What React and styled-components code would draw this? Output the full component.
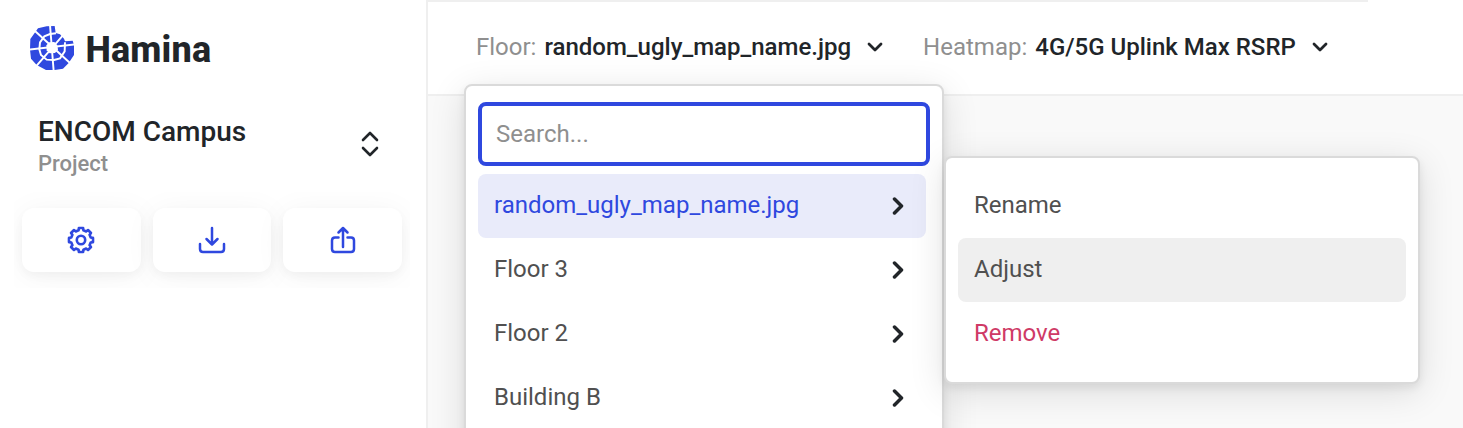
import React from "react";
import styled, { createGlobalStyle, css } from "styled-components";

const ink = "#212529";
const blue = "#2f48df";
const line = "#efefef";

const GlobalStyle = createGlobalStyle`
  *, *::before, *::after { box-sizing: border-box; }
  body { margin: 0; background: #fff; color: ${ink}; font-family: Roboto, "Liberation Sans", sans-serif; overflow: hidden; }
  button, input { font: inherit; color: inherit; }
`;

const Page = styled.div`
  display: flex;
  height: 428px;
  overflow: hidden;
`;

const Sidebar = styled.aside`
  width: 428px;
  flex: none;
  border-right: 2px solid ${line};
  display: flex;
  flex-direction: column;
`;

const Brand = styled.div`
  display: flex;
  align-items: center;
  height: 96px;
  padding-left: 30px;
  gap: 11.5px;
`;

const BrandName = styled.span`
  font-size: 36px;
  line-height: 44px;
  font-weight: 800;
  letter-spacing: 0.15px;
  margin-top: 3px;
`;

const ProjectSwitcher = styled.button`
  display: flex;
  align-items: center;
  justify-content: space-between;
  height: 96px;
  padding: 0 44px 0 38px;
  border: 0;
  background: none;
  text-align: left;
`;

const ProjectText = styled.span`
  display: flex;
  flex-direction: column;
  padding-top: 4px;
`;

const ProjectName = styled.span`
  font-size: 28px;
  line-height: 36px;
  font-weight: 500;
`;

const ProjectKind = styled.span`
  font-size: 22px;
  line-height: 28px;
  font-weight: 500;
  color: #8f8f8f;
`;

const Actions = styled.div`
  display: grid;
  grid-template-columns: repeat(3, 1fr);
  gap: 12px;
  width: 396px;
  margin-left: 14px;
  padding: 16px 8px;
  overflow: hidden;
`;

const ActionButton = styled.button`
  display: flex;
  align-items: center;
  justify-content: center;
  height: 64px;
  padding: 0;
  border: 0;
  border-radius: 12px;
  background: #fff;
  color: ${blue};
  box-shadow: 0 4px 32px rgba(0, 0, 0, 0.05), 0 4px 10px rgba(0, 0, 0, 0.035);
`;

const Main = styled.main`
  flex: 1;
  min-width: 0;
  background: #f9f9f9;
`;

const Toolbar = styled.header`
  display: flex;
  flex-direction: column;
  height: 96px;
  background: #fff;
  border-bottom: 2px solid ${line};
`;

const ToolbarEdge = styled.div`
  width: 940px;
  height: 2px;
  background: ${line};
`;

const Filters = styled.div`
  display: flex;
  align-items: center;
  height: 90px;
  padding-left: 48px;
  gap: 40px;
`;

const Picker = styled.div`
  position: relative;
  display: flex;
  align-items: center;
  font-size: 24px;
  line-height: 32px;
  white-space: nowrap;
`;

const PickerLabel = styled.span`
  color: #8f8f8f;
  margin-right: 8px;
`;

const PickerValue = styled.span`
  font-weight: 500;
  margin-right: 16px;
`;

const panel = css`
  position: absolute;
  background: #fff;
  border: 2px solid #dadada;
  border-radius: 8px;
  box-shadow: 0 4px 8px rgba(0, 0, 0, 0.07), 0 8px 36px rgba(0, 0, 0, 0.12);
`;

const FloorMenu = styled.div`
  ${panel}
  left: -12px;
  top: 53px;
  width: 480px;
  height: 420px;
  padding: 16px 12px;
`;

const FloorActions = styled.div`
  ${panel}
  left: 478px;
  top: 70px;
  width: 476px;
  height: 228px;
  padding: 16px 12px;
`;

const SearchField = styled.input`
  display: block;
  width: 452px;
  height: 64px;
  margin-bottom: 8px;
  padding: 0 14px;
  border: 4px solid ${blue};
  border-radius: 8px;
  background: #fff;
  outline: 0;
  &::placeholder { color: #8f8f8f; opacity: 1; }
`;

const rowLook = {
  plain: css`color: #505050;`,
  selected: css`color: ${blue}; background: #e9ebfa;`,
  hovered: css`color: #505050; background: #efefef;`,
  danger: css`color: #cf3a66;`,
};

const MenuRow = styled.div`
  display: flex;
  align-items: center;
  justify-content: space-between;
  width: 448px;
  height: 64px;
  padding: 0 22px 2px 16px;
  border-radius: 8px;
  ${(p) => rowLook[p.$look || "plain"]}
`;

const Stroke = styled.svg`
  display: block;
  flex: none;
  fill: none;
  stroke: currentColor;
  stroke-linecap: round;
  stroke-linejoin: round;
`;

const RowArrow = styled(Stroke)`
  color: ${ink};
  margin-top: 2px;
`;

const Logo = () => (
  <svg width="44" height="44" viewBox="30 33 132 132" aria-hidden="true">
    <path fill={blue} d="M31 72 54 40 80 34 104 33 107 54 120 58 132 71 135 79 158 77 162 90 162 120 146 144 129 161 104 165 78 165 50 150 33 131 30 104Z" />
    <g stroke="#fff" strokeWidth="5.8" fill="none">
      <path d="M90 30 101 168M27 104 165 88M45 48 150 144M128 62 48 154" />
      <path d="M135 82 134 109 120 130 102 135 80 134 63 120 58 103 60 82 73 64 90 57 108 55" />
    </g>
    <path fill="#fff" d="M88 82 103 81 112 91 114 104 105 114 89 115 80 106 79 91Z" />
  </svg>
);

const ChevronDown = () => (
  <Stroke width="16" height="10" viewBox="0 0 16 10" strokeWidth="2.8">
    <path d="M2 2 8 8 14 2" />
  </Stroke>
);

const ChevronRight = () => (
  <RowArrow width="12" height="18" viewBox="0 0 12 18" strokeWidth="3.5">
    <path d="M2.5 2 9.5 9 2.5 16" />
  </RowArrow>
);

const SwitchIcon = () => (
  <Stroke width="24" height="26" viewBox="0 0 24 26" strokeWidth="2.6">
    <path d="M5 9 12 2 19 9M5 17 12 24 19 17" />
  </Stroke>
);

const gearPath = (() => {
  const points = [];
  for (let i = 0; i < 8; i += 1) {
    [[-14, 10], [-10, 12.2], [10, 12.2], [14, 10]].forEach(([offset, r]) => {
      const a = ((i * 45 + offset - 90) * Math.PI) / 180;
      points.push(`${(14 + r * Math.cos(a)).toFixed(2)} ${(14 + r * Math.sin(a)).toFixed(2)}`);
    });
  }
  return `M${points.join("L")}Z`;
})();

const GearIcon = () => (
  <Stroke width="28" height="28" viewBox="0 0 28 28" strokeWidth="2.6">
    <path d={gearPath} />
    <circle cx="14" cy="14" r="4.2" />
  </Stroke>
);

const DownloadIcon = () => (
  <Stroke width="28" height="28" viewBox="0 0 28 28" strokeWidth="2.5">
    <path d="M14 2V18M8.5 13 14 18.5 19.5 13M2 18V23Q2 26 5 26H23Q26 26 26 23V18" />
  </Stroke>
);

const ShareIcon = () => (
  <Stroke width="28" height="28" viewBox="0 0 28 28" strokeWidth="2.5">
    <path d="M14 21V2M9.5 6.5 14 2 18.5 6.5M9.5 11.5H6Q3 11.5 3 14.5V23Q3 26 6 26H22Q25 26 25 23V14.5Q25 11.5 22 11.5H18.5" />
  </Stroke>
);

const floors = ["random_ugly_map_name.jpg", "Floor 3", "Floor 2", "Building B"];

export default function App() {
  return (
    <>
      <GlobalStyle />
      <Page>
        <Sidebar>
          <Brand>
            <Logo />
            <BrandName>Hamina</BrandName>
          </Brand>
          <ProjectSwitcher>
            <ProjectText>
              <ProjectName>ENCOM Campus</ProjectName>
              <ProjectKind>Project</ProjectKind>
            </ProjectText>
            <SwitchIcon />
          </ProjectSwitcher>
          <Actions>
            <ActionButton aria-label="Settings"><GearIcon /></ActionButton>
            <ActionButton aria-label="Download"><DownloadIcon /></ActionButton>
            <ActionButton aria-label="Share"><ShareIcon /></ActionButton>
          </Actions>
        </Sidebar>
        <Main>
          <Toolbar>
            <ToolbarEdge />
            <Filters>
              <Picker>
                <PickerLabel>Floor:</PickerLabel>
                <PickerValue>{floors[0]}</PickerValue>
                <ChevronDown />
                <FloorMenu>
                  <SearchField placeholder="Search..." />
                  {floors.map((name, i) => (
                    <MenuRow key={name} $look={i === 0 ? "selected" : "plain"}>
                      {name}
                      <ChevronRight />
                    </MenuRow>
                  ))}
                  <FloorActions>
                    <MenuRow>Rename</MenuRow>
                    <MenuRow $look="hovered">Adjust</MenuRow>
                    <MenuRow $look="danger">Remove</MenuRow>
                  </FloorActions>
                </FloorMenu>
              </Picker>
              <Picker>
                <PickerLabel>Heatmap:</PickerLabel>
                <PickerValue>4G/5G Uplink Max RSRP</PickerValue>
                <ChevronDown />
              </Picker>
            </Filters>
          </Toolbar>
        </Main>
      </Page>
    </>
  );
}
